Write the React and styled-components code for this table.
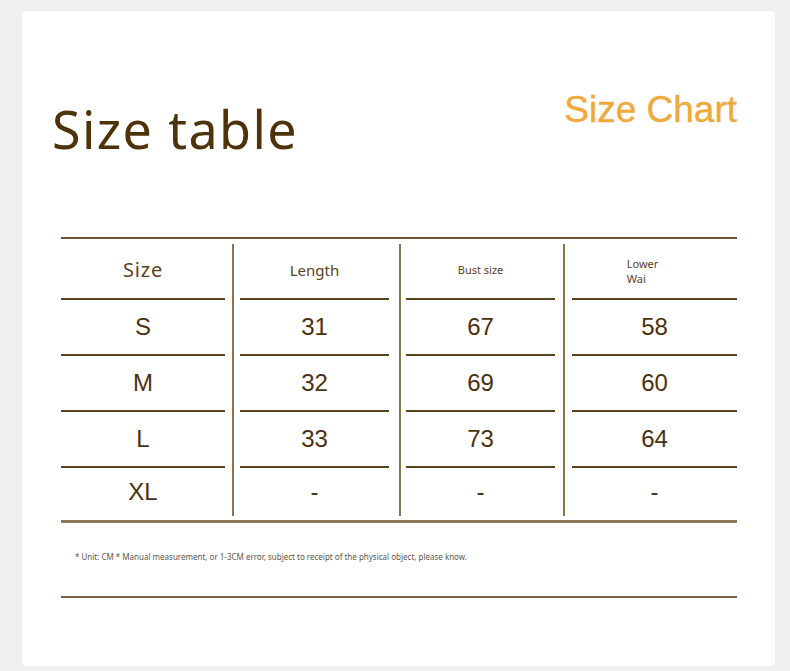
import React from 'react'
import styled, { createGlobalStyle } from 'styled-components'

const GlobalStyle = createGlobalStyle`
    html, body {
        margin: 0;
        padding: 0;
        background: #efefef;
    }
`

const columns = [
    { head: 'Size', headSize: 'big', values: ['S', 'M', 'L', 'XL'], pad: '0 7px 0 0' },
    { head: 'Length', headSize: 'mid', values: ['31', '32', '33', '-'], pad: '0 10px 0 6px', divider: true },
    { head: 'Bust size', headSize: 'small', values: ['67', '69', '73', '-'], pad: '0 8px 0 5px', divider: true },
    { head: ['Lower', 'Wai'], headSize: 'small', values: ['58', '60', '64', '-'], pad: '0 0 0 7px', divider: true },
]

function App() {
    return (
        <>
            <GlobalStyle />
            <Card>
                <Header>
                    <Title>Size table</Title>
                    <Badge>Size Chart</Badge>
                </Header>

                <Table>
                    <Grid>
                        {columns.map((col, i) => (
                            <Column key={i} $pad={col.pad} $divider={col.divider}>
                                <HeadCell>
                                    {Array.isArray(col.head) ? (
                                        <Stacked>
                                            {col.head.map((line) => <span key={line}>{line}</span>)}
                                        </Stacked>
                                    ) : (
                                        <HeadText $size={col.headSize}>{col.head}</HeadText>
                                    )}
                                </HeadCell>
                                {col.values.map((v, j) => (
                                    <Cell key={j} $last={j === col.values.length - 1}>{v}</Cell>
                                ))}
                            </Column>
                        ))}
                    </Grid>
                </Table>

                <Note>* Unit: CM * Manual measurement, or 1-3CM error, subject to receipt of the physical object, please know.</Note>
                <Rule />
            </Card>
        </>
    )
}

export default App

const Card = styled.div`
    box-sizing: border-box;
    width: 753px;
    height: 655px;
    margin: 11px 0 0 22px;
    padding: 0 38px 0 30px;
    background: #ffffff;
    border-radius: 4px;
`

const Header = styled.div`
    display: flex;
    justify-content: space-between;
    align-items: flex-start;
`

const Title = styled.h1`
    margin: 92px 0 0 0;
    font-family: "Noto Sans", "Open Sans", sans-serif;
    font-weight: 400;
    font-size: 52px;
    line-height: 52px;
    letter-spacing: 1.4px;
    color: #4e3209;
`

const Badge = styled.div`
    margin-top: 78px;
    font-family: "Liberation Sans", Arial, sans-serif;
    font-size: 37px;
    line-height: 1.15;
    color: #f0a93a;
    -webkit-text-stroke: 0.4px #f0a93a;
`

const Table = styled.div`
    margin: 82px 0 0 9px;
    padding: 5px 0 4px;
    border-top: 2px solid #6f5535;
    border-bottom: 3px solid #8e7856;
`

const Grid = styled.div`
    display: grid;
    grid-template-columns: 171px 167px 164px 1fr;
`

const Column = styled.div`
    display: flex;
    flex-direction: column;
    padding: ${(p) => p.$pad};
    border-left: ${(p) => (p.$divider ? '2px solid #8a7453' : 'none')};
`

const HeadCell = styled.div`
    height: 54px;
    display: flex;
    align-items: center;
    justify-content: center;
    border-bottom: 2px solid #5e4321;
    color: #5a4125;
    font-family: "Noto Sans", "Open Sans", sans-serif;
`

const HeadText = styled.span`
    font-size: ${(p) => (p.$size === 'big' ? '20px' : p.$size === 'mid' ? '15px' : '11px')};
    letter-spacing: ${(p) => (p.$size === 'big' ? '0.8px' : '0')};
    margin-top: -3px;
`

const Stacked = styled.div`
    display: flex;
    flex-direction: column;
    align-self: flex-start;
    margin: 12px 0 0 -24px;
    font-size: 11px;
    line-height: 15px;
`

const Cell = styled.div`
    height: ${(p) => (p.$last ? '48px' : '54px')};
    display: flex;
    align-items: center;
    justify-content: center;
    border-bottom: ${(p) => (p.$last ? 'none' : '2px solid #5e4321')};
    font-family: "Liberation Sans", Arial, sans-serif;
    font-size: 24px;
    color: #4a3110;
`

const Note = styled.p`
    margin: 28px 0 0 23px;
    font-family: "Noto Sans", "Open Sans", sans-serif;
    font-size: 8px;
    line-height: 12px;
    color: #5c5650;
`

const Rule = styled.div`
    margin: 33px 0 0 9px;
    height: 2px;
    background: #7a6246;
`
